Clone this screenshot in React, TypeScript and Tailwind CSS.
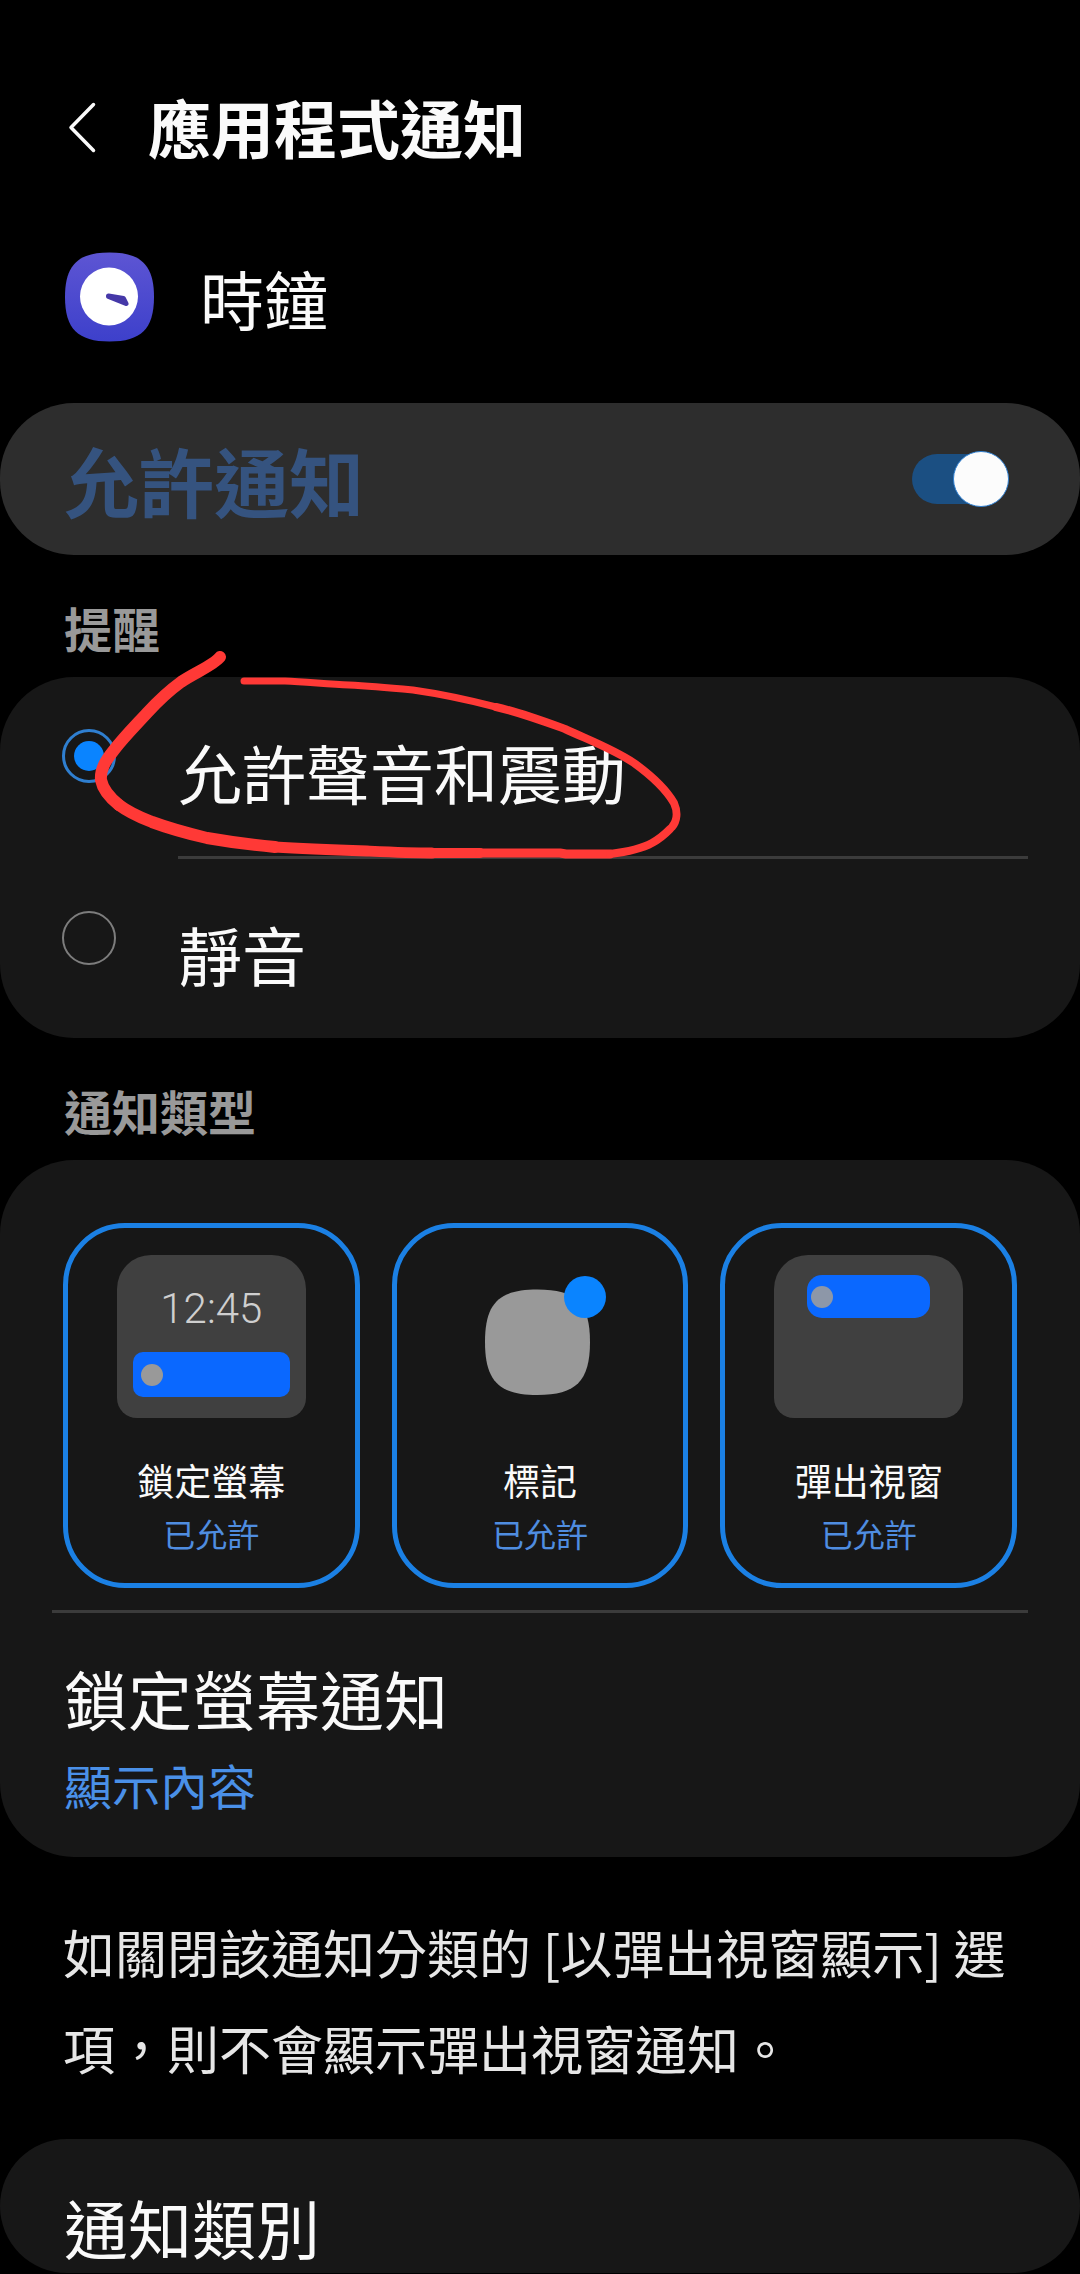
import { useState, type ReactNode } from 'react';

type AlertMode = 'sound' | 'silent';

const alertOptions: { id: AlertMode; label: string }[] = [
  { id: 'sound', label: '允許聲音和震動' },
  { id: 'silent', label: '靜音' },
];

const SectionTitle = ({ children }: { children: ReactNode }) => (
  <h2 className="mt-[53px] mb-[21px] px-16 text-[48px] leading-[48px] font-bold text-[#999999]">{children}</h2>
);

const ClockIcon = () => (
  <svg width="90" height="90" viewBox="0 0 90 90" aria-hidden="true" className="shrink-0">
    <defs>
      <linearGradient id="clock-bg" x1="0" y1="0" x2="0" y2="1">
        <stop offset="0" stopColor="#5d55d3" />
        <stop offset="1" stopColor="#3d40cb" />
      </linearGradient>
    </defs>
    <path d="M45.500 0.500C77 0.500 90 13 90 45S77 89.500 45.500 89.500S1 77 1 45S14 0.500 45.500 0.500Z" fill="url(#clock-bg)" />
    <circle cx="45" cy="44.500" r="29" fill="#ffffff" />
    <path d="M44.500 44L59.500 46.500L62 51.500L44.500 44.500Z" fill="#4538a8" stroke="#4538a8" strokeWidth="5" strokeLinejoin="round" />
  </svg>
);

const LockScreenPreview = () => (
  <span className="flex h-[163px] w-[189px] flex-col rounded-t-[34px] rounded-b-[20px] bg-[#404040] px-4 pt-[30px]">
    <span className="text-center text-[42px] leading-[48px] font-light text-[#cfcfcf]">12:45</span>
    <span className="mt-[19px] flex h-[45px] items-center rounded-[10px] bg-[#0a68ff] pl-2">
      <span className="size-[22px] rounded-full bg-[#999999]" />
    </span>
  </span>
);

const BadgePreview = () => (
  <svg width="189" height="163" viewBox="0 0 189 163" aria-hidden="true">
    <path d="M92.500 34.500C131 34.500 145 48 145 87S131 140 92.500 140S40 126 40 87S54 34.500 92.500 34.500Z" fill="#999999" />
    <circle cx="140" cy="42" r="21" fill="#0a84ff" />
  </svg>
);

const PopupPreview = () => (
  <span className="flex h-[163px] w-[189px] flex-col rounded-t-[34px] rounded-b-[20px] bg-[#404040] px-[33px] pt-5">
    <span className="flex h-[43px] items-center rounded-[15px] bg-[#0a68ff] pl-1">
      <span className="size-[22px] rounded-full bg-[#8d97a8]" />
    </span>
  </span>
);

const TypeCard = ({ label, preview }: { label: string; preview: ReactNode }) => {
  const [allowed, setAllowed] = useState(true);
  return (
    <button type="button" aria-pressed={allowed} onClick={() => setAllowed(!allowed)} className={`flex flex-col items-center rounded-[62px] border-[5px] pt-[27px] pb-[27px] ${allowed ? 'border-[#1b80e4]' : 'border-[#404040]'}`}>
      {preview}
      <span className="mt-10 text-[37px] leading-[52px] text-[#fafafa]">{label}</span>
      <span className="mt-1.5 text-[32px] leading-[40px] text-[#4f8de0]">{allowed ? '已允許' : '已關閉'}</span>
    </button>
  );
};

// Hand-drawn loop, the pen gets thinner as it goes round
const PenMark = () => (
  <svg width="700" height="230" viewBox="0 640 700 230" fill="none" stroke="#ff3936" strokeLinecap="round" strokeLinejoin="round" aria-hidden="true" className="pointer-events-none absolute -top-[37px] left-0">
    <path d="M220 657C214 665 194 673 181 682C170 690 158 701 147 713C136 725 124 737 114 750C106 760 100 769 101 780C103 790 109 797 119 805" strokeWidth="12" />
    <path d="M119 805C131 814 142 818 152 822C171 829 190 834 207 838C230 842 253 845 275 847" strokeWidth="12" />
    <path d="M275 847C306 849 336 850 367 851C389 852 410 853 432 853" strokeWidth="11" />
    <path d="M432 853H480" strokeWidth="10" />
    <path d="M480 853H560L566 854H610" strokeWidth="9" />
    <path d="M610 854C626 852 641 849 652 843C663 837 667 832 672 827C677 821 678 812 674 803C667 791 652 776 634 763C613 749 591 741 565 729C543 721 519 712 496 707" strokeWidth="8" />
    <path d="M496 707C469 700 441 694 413 690C392 688 371 686 349 685C328 684 306 682 285 681H244" strokeWidth="7" />
  </svg>
);

export default function App() {
  const [enabled, setEnabled] = useState(true);
  const [mode, setMode] = useState<AlertMode>('sound');

  return (
    <main lang="zh-Hant" className="min-h-screen overflow-hidden bg-black font-['Roboto','Noto_Sans_CJK_TC',sans-serif] text-[#fafafa]">
      <header className="flex items-start gap-11 px-16 pt-[92px]">
        <button type="button" aria-label="返回" className="flex h-[70px] w-10 items-center">
          <svg width="40" height="60" viewBox="0 0 40 60" fill="none" stroke="#fafafa" strokeWidth="3.500" strokeLinecap="round" strokeLinejoin="round" aria-hidden="true">
            <path d="M29.500 7.500L7 30.500L29.500 53.500" />
          </svg>
        </button>
        <h1 className="text-[63px] leading-[80px] font-bold">應用程式通知</h1>
      </header>

      <div className="mt-20 flex items-start gap-[46px] px-16">
        <ClockIcon />
        <p className="pt-5 text-[64px] leading-[64px]">時鐘</p>
      </div>

      <label className="mt-[61px] flex items-start justify-between rounded-[74px] bg-[#2d2d2d] pt-[43px] pr-[76px] pb-[29px] pl-16">
        <span className="text-[75px] leading-[80px] font-bold text-[#35537f]">允許通知</span>
        <input
          type="checkbox"
          role="switch"
          checked={enabled}
          onChange={(event) => setEnabled(event.target.checked)}
          className="relative mt-2 h-[50px] w-[92px] appearance-none rounded-full bg-[#555555] before:absolute before:-top-[3px] before:-left-[5px] before:size-14 before:rounded-full before:border before:border-[#2f7fd0] before:bg-[#fcfcfc] checked:bg-[#1b4f82] checked:before:left-[41px]"
        />
      </label>

      <SectionTitle>提醒</SectionTitle>
      <section aria-label="提醒" className="relative rounded-[74px] bg-[#171717]">
        {alertOptions.map((option, index) => (
          <div key={option.id}>
            {index > 0 && <hr className="mr-[52px] ml-[178px] h-[3px] border-0 bg-[#3b3b3b]" />}
            <label className="flex items-start gap-[62px] px-[62px] pt-[52px] pb-[46px]">
              <input
                type="radio"
                name="alert-mode"
                checked={mode === option.id}
                onChange={() => setMode(option.id)}
                className="flex size-[54px] shrink-0 appearance-none items-center justify-center rounded-full border-2 border-[#7d7d7d] checked:border-3 checked:border-[#2f7fd0] checked:before:size-[30px] checked:before:rounded-full checked:before:bg-[#0a84ff]"
              />
              <span className="pt-[17px] text-[64px] leading-[64px]">{option.label}</span>
            </label>
          </div>
        ))}
        <PenMark />
      </section>

      <SectionTitle>通知類型</SectionTitle>
      <section aria-label="通知類型" className="rounded-[74px] bg-[#171717] pt-[63px]">
        <div className="grid grid-cols-3 gap-8 px-[63px]">
          <TypeCard label="鎖定螢幕" preview={<LockScreenPreview />} />
          <TypeCard label="標記" preview={<BadgePreview />} />
          <TypeCard label="彈出視窗" preview={<PopupPreview />} />
        </div>
        <hr className="mx-[52px] mt-[22px] h-[3px] border-0 bg-[#3b3b3b]" />
        <button type="button" className="block w-full px-16 pt-[51px] pb-[38px] text-left">
          <span className="block text-[64px] leading-[80px]">鎖定螢幕通知</span>
          <span className="mt-[15px] block text-[48px] leading-[60px] text-[#4a90e8]">顯示內容</span>
        </button>
      </section>

      <p className="mt-[47px] px-[63px] font-['Noto_Sans_CJK_TC',sans-serif] text-[52px] leading-[96px] text-[#e6e6e6]">如關閉該通知分類的 [以彈出視窗顯示] 選項，則不會顯示彈出視窗通知。</p>

      <button type="button" className="mt-[43px] block w-full rounded-[67px] bg-[#171717] px-16 pt-[62px] pb-2 text-left text-[64px] leading-[64px]">通知類別</button>
    </main>
  );
}
